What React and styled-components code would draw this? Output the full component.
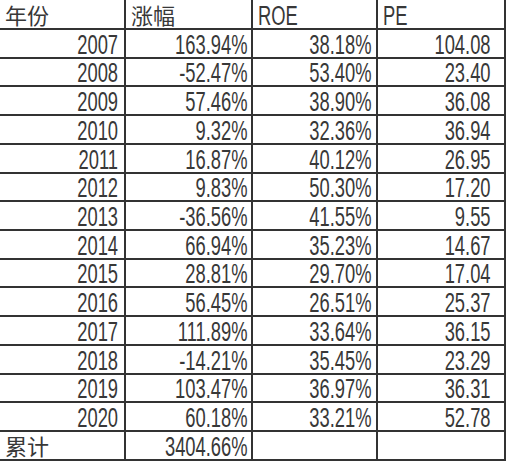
import styled, { createGlobalStyle } from 'styled-components';

const rows = [
  ['2007', '163.94%', '38.18%', '104.08'],
  ['2008', '-52.47%', '53.40%', '23.40'],
  ['2009', '57.46%', '38.90%', '36.08'],
  ['2010', '9.32%', '32.36%', '36.94'],
  ['2011', '16.87%', '40.12%', '26.95'],
  ['2012', '9.83%', '50.30%', '17.20'],
  ['2013', '-36.56%', '41.55%', '9.55'],
  ['2014', '66.94%', '35.23%', '14.67'],
  ['2015', '28.81%', '29.70%', '17.04'],
  ['2016', '56.45%', '26.51%', '25.37'],
  ['2017', '111.89%', '33.64%', '36.15'],
  ['2018', '-14.21%', '35.45%', '23.29'],
  ['2019', '103.47%', '36.97%', '36.31'],
  ['2020', '60.18%', '33.21%', '52.78'],
];

const padRight = [6, 3, 4, 13];

export default function App() {
  return (
    <>
      <GlobalStyle />
      <Sheet>
        <Cell><Han>年份</Han></Cell>
        <Cell><Han>涨幅</Han></Cell>
        <Cell><Latin>ROE</Latin></Cell>
        <Cell><Latin>PE</Latin></Cell>
        {rows.map((row) =>
          row.map((value, i) => (
            <Cell key={row[0] + i} $right $pad={padRight[i]}>
              <Latin $right>{value}</Latin>
            </Cell>
          ))
        )}
        <Cell><Han>累计</Han></Cell>
        <Cell $right $pad={padRight[1]}><Latin $right>3404.66%</Latin></Cell>
        <Cell />
        <Cell />
      </Sheet>
    </>
  );
}

const GlobalStyle = createGlobalStyle`
  body {
    margin: 0;
    background: #fff;
  }
`;

const Sheet = styled.div`
  display: grid;
  grid-template-columns: 126px 127px 125px 128px;
  grid-template-rows: 30px repeat(15, 1fr);
  width: 506px;
  height: 461px;
  color: #383838;
`;

const Cell = styled.div`
  display: flex;
  align-items: flex-end;
  justify-content: ${({ $right }) => ($right ? 'flex-end' : 'flex-start')};
  padding: 0 ${({ $pad }) => ($pad ? $pad : 0)}px 0 5px;
  border-right: 2px solid #333;
  border-bottom: 2px solid #333;
  white-space: nowrap;
`;

const Latin = styled.span`
  display: inline-block;
  font-family: 'Liberation Sans', Arial, sans-serif;
  font-size: 27px;
  line-height: 23px;
  transform: scaleX(0.68);
  transform-origin: ${({ $right }) => ($right ? 'right' : 'left')} center;
`;

const Han = styled.span`
  font-family: 'Noto Sans CJK SC', sans-serif;
  font-size: 22px;
  line-height: 27px;
`;
